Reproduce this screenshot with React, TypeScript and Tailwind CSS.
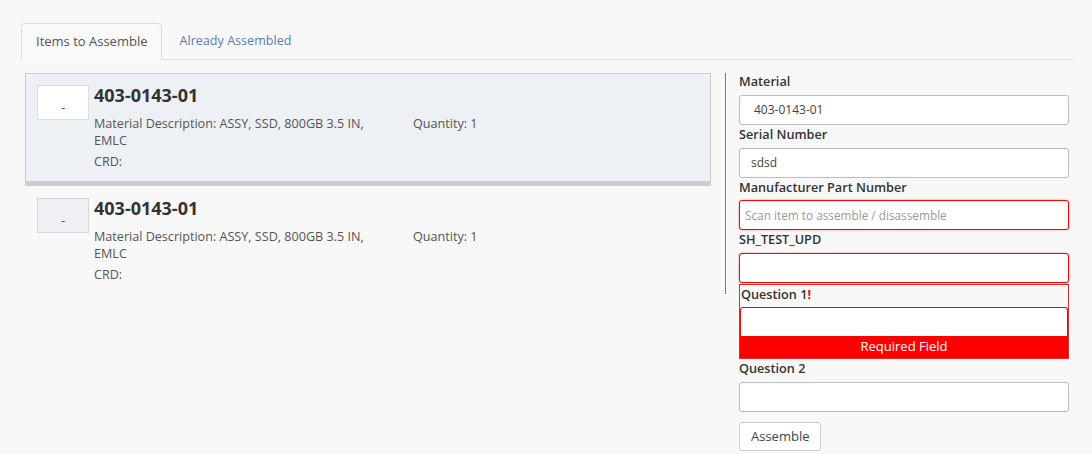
import React from "react";

const font = { fontFamily: '"Open Sans", "Noto Sans", sans-serif' };

function Item({ selected }: { selected: boolean }) {
  return (
    <div
      className={
        selected
          ? "flex bg-[#edf0f5] border border-[#cccccc] border-b-[5px] pl-[11px] pt-[11px] pb-[11px]"
          : "flex pl-[12px] pt-[12px] pb-[10px]"
      }
    >
      <button
        className={
          "w-[52px] h-[35px] border flex items-center justify-center text-[13px] text-[#555] pt-[11px] " +
          (selected ? "bg-white border-[#dddddd]" : "bg-[#eef0f4] border-[#d6d6d6]")
        }
      >
        -
      </button>
      <div className="ml-[5px] flex flex-col">
        <div className="text-[18px] font-bold leading-[22px] text-[#333] -mt-[1px]">403-0143-01</div>
        <div className="flex mt-[9px] text-[12.6px] leading-[17px] text-[#555]">
          <div className="w-[300px]">Material Description: ASSY, SSD, 800GB 3.5 IN, EMLC</div>
          <div className="ml-[19px]">Quantity: 1</div>
        </div>
        <div className="mt-[4px] text-[12.6px] leading-[17px] text-[#555]">CRD:</div>
      </div>
    </div>
  );
}

function Label({ children }: { children: React.ReactNode }) {
  return <div className="text-[12.7px] font-semibold leading-[18px] mb-[4.8px] text-[#333]">{children}</div>;
}

function Input({ value, placeholder, error, pl }: { value?: string; placeholder?: string; error?: boolean; pl?: string }) {
  return (
    <div
      className={
        "h-[30px] bg-white rounded-[3px] border flex items-center text-[12px] " +
        (error ? "border-[#ff0000] shadow-[0_0_2px_rgba(255,0,0,0.5)] " : "border-[#bcbcbc] ") +
        (pl ?? "pl-[11px]")
      }
    >
      {value ? <span className="text-[#444]">{value}</span> : null}
      {placeholder ? <span className="text-[#999] text-[11.8px] -ml-[6px]">{placeholder}</span> : null}
    </div>
  );
}

export default function App() {
  return (
    <div className="min-h-[454px] bg-[#f8f8f8] pt-[23px] pl-[21px] pr-[19px]" style={font}>
      <div className="flex border-b border-[#dddddd] h-[37px]">
        <div className="h-[37px] -mb-[1px] px-[14px] border border-b-0 border-[#dddddd] rounded-t-[4px] bg-[#f9f9f9] flex items-center text-[13px] text-[#555]">
          Items to Assemble
        </div>
        <div className="h-[36px] px-[17px] flex items-center text-[12.6px] text-[#5b7bb8]">Already Assembled</div>
      </div>
      <div className="flex px-[4px] mt-[12px] items-start">
        <div className="w-[686px] flex flex-col mt-[1px]">
          <Item selected />
          <Item selected={false} />
        </div>
        <div className="ml-[14px] mt-[1px] w-px h-[221px] bg-[#7a7a7a]" />
        <div className="ml-[13px] w-[330px] flex flex-col">
          <Label>Material</Label>
          <Input value="403-0143-01" pl="pl-[14px]" />
          <Label>Serial Number</Label>
          <Input value="sdsd" />
          <Label>Manufacturer Part Number</Label>
          <Input placeholder="Scan item to assemble / disassemble" error />
          <Label>SH_TEST_UPD</Label>
          <Input error />
          <div className="border border-[#e02b2b] mt-[1px]">
            <div className="text-[12.7px] font-semibold leading-[18px] mb-[4px] text-[#333] pl-[1px]">
              Question 1<span className="text-[#ff0000] font-bold">!</span>
            </div>
            <div className="h-[29px] bg-white rounded-t-[3px] border border-b-0 border-[#ff0000]" />
            <div className="h-[22px] bg-[#ff0000] text-white text-[13px] flex items-center justify-center">Required Field</div>
          </div>
          <Label>Question 2</Label>
          <Input />
          <div className="mt-[10px]">
            <button className="h-[29px] px-[11px] bg-white border border-[#cccccc] rounded-[3px] text-[13px] text-[#444]">
              Assemble
            </button>
          </div>
        </div>
      </div>
    </div>
  );
}
